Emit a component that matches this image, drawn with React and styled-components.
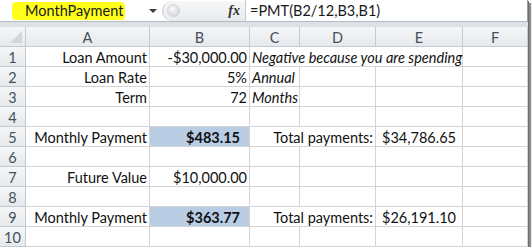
import React from 'react'
import styled, {createGlobalStyle} from 'styled-components'

const COLS = [26, 124, 100, 50, 76, 87, 65]
const LETTERS = ['A', 'B', 'C', 'D', 'E', 'F']

// each row lists its cells from column A; span = how many columns it covers
const ROWS = [
  [
    {text: 'Loan Amount', align: 'right'},
    {text: '-$30,000.00', align: 'right'},
    {text: 'Negative because you are spending', italic: true, span: 3},
    {}
  ],
  [
    {text: 'Loan Rate', align: 'right'},
    {text: '5%', align: 'right'},
    {text: 'Annual', italic: true},
    {},
    {},
    {}
  ],
  [
    {text: 'Term', align: 'right'},
    {text: '72', align: 'right'},
    {text: 'Months', italic: true},
    {},
    {},
    {}
  ],
  [{}, {}, {}, {}, {}, {}],
  [
    {text: 'Monthly Payment', align: 'right'},
    {text: '$483.15', align: 'right', bold: true, fill: true},
    {text: 'Total payments:', align: 'right', span: 2},
    {text: '$34,786.65', align: 'center'},
    {}
  ],
  [{}, {}, {}, {}, {}, {}],
  [
    {text: 'Future Value', align: 'right'},
    {text: '$10,000.00', align: 'right'},
    {},
    {},
    {},
    {}
  ],
  [{}, {}, {}, {}, {}, {}],
  [
    {text: 'Monthly Payment', align: 'right'},
    {text: '$363.77', align: 'right', bold: true, fill: true},
    {text: 'Total payments:', align: 'right', span: 2},
    {text: '$26,191.10', align: 'center'},
    {}
  ],
  [{}, {}, {}, {}, {}, {}]
]

const GlobalStyle = createGlobalStyle`
  body {
    margin: 0;
    background: #ffffff;
    font-family: 'Lato', 'Liberation Sans', sans-serif;
  }
`

const Frame = styled.div`
  width: 528px;
  background: #ffffff;
  box-shadow: 1px 1px 0 #6b6b6b, 3px 3px 1px #8a8a8a;
`

const FormulaBar = styled.div`
  display: flex;
  align-items: center;
  height: 22px;
  border-bottom: 1px solid #b4bac2;
  box-sizing: border-box;
  background: #ffffff;
`

const NameBox = styled.div`
  width: 160px;
  display: flex;
  align-items: center;
  padding-left: 12px;
  box-sizing: border-box;
`

const Marker = styled.span`
  background: #ffff1a;
  border-radius: 4px;
  padding: 0 0 0 13px;
  height: 18px;
  line-height: 18px;
  font-size: 14.5px;
  color: #1a1a1a;
  width: 100px;
`

const Arrow = styled.span`
  margin-left: 24px;
  width: 0;
  height: 0;
  border-left: 4px solid transparent;
  border-right: 4px solid transparent;
  border-top: 4px solid #3c3c3c;
`

const FxZone = styled.div`
  margin-left: 2px;
  width: 83px;
  height: 20px;
  display: flex;
  align-items: center;
  justify-content: space-between;
  background: linear-gradient(#f6f7f8, #e8eaed);
  border-radius: 10px 0 0 10px;
  border-left: 1px solid #c3c7cc;
  box-sizing: border-box;
  padding: 0 5px 0 4px;
`

const Grip = styled.span`
  width: 11px;
  height: 11px;
  border-radius: 50%;
  background: radial-gradient(circle at 40% 35%, #fafafa, #c9ccd0);
  border: 1px solid #d0d3d7;
`

const Fx = styled.span`
  font-family: 'Liberation Serif', serif;
  font-style: italic;
  font-weight: bold;
  font-size: 14px;
  color: #333333;
`

const Formula = styled.div`
  flex: 1;
  height: 22px;
  line-height: 21px;
  border-left: 1px solid #c6cbd1;
  border-right: 1px solid #9aa0a8;
  padding-left: 4px;
  font-size: 14.5px;
  color: #1a1a1a;
  box-sizing: border-box;
`

const Gap = styled.div`
  height: 5px;
  background: #dde1e6;
`

const Sheet = styled.div`
  display: grid;
  grid-template-columns: ${COLS.map(c => c + 'px').join(' ')};
  grid-auto-rows: 20px;
  font-size: 14.5px;
`

const Head = styled.div`
  background: linear-gradient(#f5f6f7, #e6e9ed);
  border-right: 1px solid #c4c9cf;
  border-bottom: 1px solid #c4c9cf;
  box-sizing: border-box;
  display: flex;
  align-items: center;
  justify-content: center;
  color: #46505c;
  font-size: 14.5px;
  padding-top: 1px;
`

const Corner = styled(Head)`
  position: relative;
  &::after {
    content: '';
    position: absolute;
    right: 3px;
    bottom: 3px;
    border-left: 12px solid transparent;
    border-bottom: 12px solid #d3d6da;
  }
`

const Cell = styled.div`
  grid-column: span ${p => p.$span || 1};
  border-right: 1px solid #d4d4d4;
  border-bottom: 1px solid #d4d4d4;
  box-sizing: border-box;
  background: ${p => (p.$fill ? '#b8cce4' : '#ffffff')};
  text-align: ${p => p.$align || 'left'};
  font-style: ${p => (p.$italic ? 'italic' : 'normal')};
  font-weight: ${p => (p.$bold ? 700 : 400)};
  padding: 1px ${p => (p.$fill ? '9px' : '2px')} 0 2px;
  line-height: 19px;
  white-space: nowrap;
  color: #111111;
`

export default function App() {
  return (
    <>
      <GlobalStyle />
      <Frame>
        <FormulaBar>
          <NameBox>
            <Marker>MonthPayment</Marker>
            <Arrow />
          </NameBox>
          <FxZone>
            <Grip />
            <Fx>fx</Fx>
          </FxZone>
          <Formula>=PMT(B2/12,B3,B1)</Formula>
        </FormulaBar>
        <Gap />
        <Sheet>
          <Corner />
          {LETTERS.map(l => (
            <Head key={l}>{l}</Head>
          ))}
          {ROWS.map((row, r) => (
            <React.Fragment key={r}>
              <Head>{r + 1}</Head>
              {row.map((c, i) => (
                <Cell
                  key={i}
                  $span={c.span}
                  $align={c.align}
                  $italic={c.italic}
                  $bold={c.bold}
                  $fill={c.fill}
                >
                  {c.text}
                </Cell>
              ))}
            </React.Fragment>
          ))}
        </Sheet>
      </Frame>
    </>
  )
}
